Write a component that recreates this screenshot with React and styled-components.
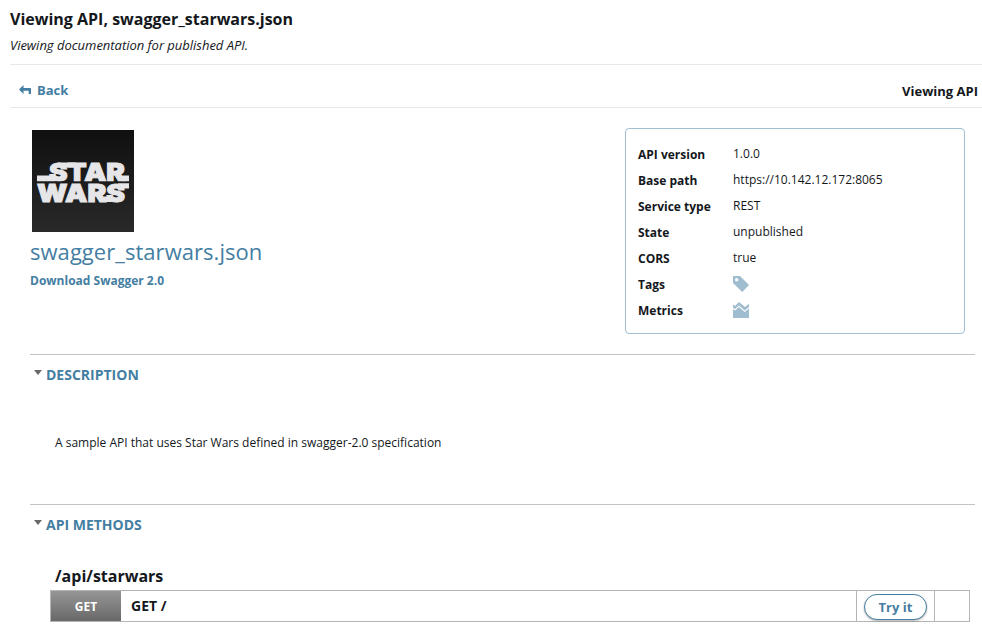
import React from "react";
import styled, { createGlobalStyle } from "styled-components";

const GlobalStyle = createGlobalStyle`
  * { box-sizing: border-box; }
  body {
    margin: 0;
    background: #fff;
    color: #14181c;
    font-family: "Open Sans", "Noto Sans", sans-serif;
    font-size: 12px;
    overflow: hidden;
  }
`;

const Page = styled.main`
  height: 634px;
  padding: 9px 0 0 10px;
  overflow: hidden;
`;
const Header = styled.header`
  height: 56px;
  border-bottom: 1px solid #e8e8e8;
`;
const Title = styled.h1`
  margin: 0;
  font-size: 16px;
  line-height: 20px;
  font-weight: 700;
`;
const Subtitle = styled.p`
  margin: 7px 0 0;
  font-size: 13px;
  line-height: 18px;
  font-style: italic;
  letter-spacing: -0.02px;
`;
const Toolbar = styled.nav`
  display: flex;
  justify-content: space-between;
  height: 43px;
  padding: 16px 4px 0 9px;
  border-bottom: 1px solid #e8e8e8;
  font-size: 13px;
  font-weight: 700;
  line-height: 18px;
`;
const BackLink = styled.a`
  display: flex;
  gap: 6px;
  color: #447ea2;
  svg { margin-top: 4px; }
`;
const Current = styled.span`
  margin-top: 1px;
`;
const Summary = styled.section`
  display: flex;
  justify-content: space-between;
  height: 246px;
  padding: 20px 17px 0 20px;
`;
const Logo = styled.svg`
  display: block;
  margin: 2px 0 0 2px;
`;
const ApiName = styled.h2`
  margin: 3px 0 0;
  color: #447ea2;
  font-size: 22px;
  line-height: 32px;
  font-weight: 400;
  letter-spacing: 0.04px;
`;
const Download = styled.a`
  display: block;
  margin-top: 5px;
  color: #447ea2;
  font-weight: 700;
  line-height: 18px;
`;
const Details = styled.dl`
  width: 340px;
  height: 206px;
  margin: 0;
  padding: 13px 12px;
  border: 1px solid #a0bfd4;
  border-radius: 4px;
`;
const Detail = styled.div`
  display: grid;
  grid-template-columns: 95px 1fr;
  height: 26px;
  line-height: 26px;
`;
const Term = styled.dt`
  font-weight: 700;
`;
const Value = styled.dd`
  margin: -1px 0 0;
  svg { display: block; margin-top: 5px; }
`;
const Section = styled.section`
  height: 150px;
  margin: 0 7px 0 20px;
  padding-top: 10px;
  border-top: 1px solid #c4c4c4;
`;
const SectionTitle = styled.h3`
  display: flex;
  gap: 4px;
  margin: 0;
  padding-left: 4px;
  color: #447ea2;
  font-size: 14px;
  line-height: 20px;
  font-weight: 700;
  svg { margin-top: 5px; }
`;
const Description = styled.p`
  margin: 49px 0 0 25px;
  line-height: 18px;
`;
const Path = styled.h4`
  margin: 30px 0 0 25px;
  font-size: 16px;
  line-height: 22px;
  font-weight: 700;
`;
const Method = styled.div`
  display: grid;
  grid-template-columns: 70px 1fr 78px 35px;
  width: 920px;
  height: 32px;
  margin: 3px 0 0 20px;
  border: 1px solid #b5b5b5;
`;
const Verb = styled.span`
  height: 30px;
  background: linear-gradient(#969696, #686868);
  color: #fff;
  font-weight: 700;
  line-height: 31px;
  text-align: center;
`;
const Operation = styled.span`
  padding-left: 10px;
  font-size: 14px;
  font-weight: 700;
  line-height: 29px;
`;
const Cell = styled.div`
  height: 30px;
  border-left: 1px solid #b5b5b5;
  padding: 3px 7px;
`;
const TryButton = styled.button`
  display: block;
  width: 63px;
  height: 26px;
  padding: 0;
  border: 1px solid #447ea2;
  border-radius: 13px;
  background: #fff;
  box-shadow: 0 1px 2px rgba(0, 0, 0, 0.3);
  color: #447ea2;
  font: 700 13px/24px "Open Sans", sans-serif;
`;

const StarWarsLogo = () => (
  <Logo width="102" height="102" viewBox="0 0 102 102">
    <defs>
      <linearGradient id="backdrop" x2="0" y2="1">
        <stop stopColor="#101010" />
        <stop offset="1" stopColor="#292929" />
      </linearGradient>
    </defs>
    <rect width="102" height="102" fill="url(#backdrop)" />
    <g
      fill="#e6e6e9"
      stroke="#e6e6e9"
      strokeWidth="1"
      fontFamily="Inter"
      fontWeight="900"
      fontSize="25"
    >
      <text x="17" y="51" textLength="76" lengthAdjust="spacingAndGlyphs">STAR</text>
      <text x="5" y="71.5" textLength="88" lengthAdjust="spacingAndGlyphs">WARS</text>
    </g>
    <path
      d="M5 45.5h18v6H5zM88 45.5h9v6h-7zM26 32.4h18v5H24zM86 53.2h11v5.2H86zM71 66.5h9v5.5h-7z"
      fill="#e6e6e9"
    />
    <path d="M4 51.6h94v1.4H4z" fill="#1c1c1c" />
  </Logo>
);
const BackIcon = () => (
  <svg width="12" height="9" viewBox="0 0 12 9">
    <path d="M0 4.4 4.5 0v3H12v6h-2.3V5.7H4.5V9z" fill="#447ea2" />
  </svg>
);
const TagIcon = () => (
  <svg width="16" height="16" viewBox="0 0 16 16">
    <path fillRule="evenodd" d="M0 0h7l9 9-6.8 7L0 7zM3.7 2a1.7 1.7 0 1 0 0 3.4 1.7 1.7 0 0 0 0-3.4z" fill="#a0bccf" />
  </svg>
);
const MetricsIcon = () => (
  <svg width="16" height="16" viewBox="0 0 16 16">
    <path d="M0 2.3 2 4l4-4 6 5 4-3.3V5l-4.3 3.6L6 3.5 2 7 0 5.4zM0 7l2 1.6 4-3.5 5.7 5L16 6.6V16H0z" fill="#a0bccf" />
  </svg>
);
const Caret = () => (
  <svg width="8" height="5" viewBox="0 0 8 5">
    <path d="M0 0h8L4 5z" fill="#686868" />
  </svg>
);

const details = [
  ["API version", "1.0.0"],
  ["Base path", "https://10.142.12.172:8065"],
  ["Service type", "REST"],
  ["State", "unpublished"],
  ["CORS", "true"],
  ["Tags", <TagIcon key="tag" />],
  ["Metrics", <MetricsIcon key="metrics" />],
];

export default function App() {
  return (
    <>
      <GlobalStyle />
      <Page>
        <Header>
          <Title>Viewing API, swagger_starwars.json</Title>
          <Subtitle>Viewing documentation for published API.</Subtitle>
        </Header>
        <Toolbar>
          <BackLink><BackIcon />Back</BackLink>
          <Current>Viewing API</Current>
        </Toolbar>
        <Summary>
          <div>
            <StarWarsLogo />
            <ApiName>swagger_starwars.json</ApiName>
            <Download>Download Swagger 2.0</Download>
          </div>
          <Details>
            {details.map(([term, value]) => (
              <Detail key={term}>
                <Term>{term}</Term>
                <Value>{value}</Value>
              </Detail>
            ))}
          </Details>
        </Summary>
        <Section>
          <SectionTitle><Caret />DESCRIPTION</SectionTitle>
          <Description>A sample API that uses Star Wars defined in swagger-2.0 specification</Description>
        </Section>
        <Section>
          <SectionTitle><Caret />API METHODS</SectionTitle>
          <Path>/api/starwars</Path>
          <Method>
            <Verb>GET</Verb>
            <Operation>GET /</Operation>
            <Cell><TryButton>Try it</TryButton></Cell>
            <Cell />
          </Method>
        </Section>
      </Page>
    </>
  );
}
